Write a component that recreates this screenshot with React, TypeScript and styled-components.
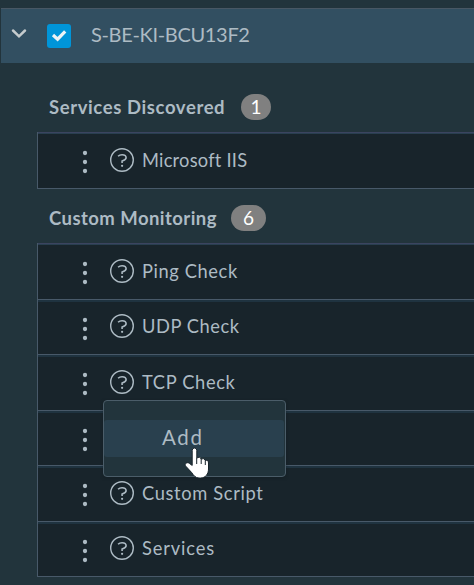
import React from 'react';
import styled, { createGlobalStyle } from 'styled-components';

const GlobalStyle = createGlobalStyle`
  * { box-sizing: border-box; }
  body {
    margin: 0;
    overflow: hidden;
    background: #22343c;
    color: #adbbc4;
    font-family: Lato, "Open Sans", sans-serif;
  }
`;

const Page = styled.main`
  position: relative;
  width: 474px;
  height: 585px;
  padding-top: 8px;
  overflow: hidden;
  background: #22343c;
`;

const HostRow = styled.header`
  display: flex;
  align-items: center;
  height: 55px;
  margin-left: 1px;
  padding: 0 0 1px 10px;
  border-top: 1px solid #485764;
  background: #324f61;
`;

const Chevron = styled.svg`
  width: 16px;
  height: 16px;
  margin-top: -5px;
`;

const CheckBox = styled.span`
  display: flex;
  width: 24px;
  height: 24px;
  margin: 1px 20px 0 20px;
  border-radius: 3px;
  background: #0095d9;
`;

const Label = styled.span<{ $spacing: number }>`
  letter-spacing: ${({ $spacing }) => $spacing}px;
  white-space: nowrap;
`;

const HostName = styled(Label)`
  font-size: 20px;
  line-height: 24px;
  margin-top: -4px;
`;

const Group = styled.section<{ $top: number }>`
  padding: ${({ $top }) => $top}px 0 0 37px;
`;

const GroupHeading = styled.h2`
  display: flex;
  align-items: center;
  height: 26px;
  margin: 0 0 12px;
  padding-left: 12px;
  font-size: 18.5px;
  font-weight: 700;
  line-height: 26px;
`;

const HeadingText = styled(Label)<{ $width: number }>`
  width: ${({ $width }) => $width}px;
`;

const Badge = styled.span<{ $width: number }>`
  width: ${({ $width }) => $width}px;
  height: 26px;
  border-radius: 13px;
  background: #808080;
  color: #fff;
  font-size: 19px;
  font-weight: 400;
  text-align: center;
`;

const List = styled.ul`
  margin: 0;
  padding: 0;
  list-style: none;
  border-left: 1px solid #485969;
  border-bottom: 1px solid #485969;
`;

const Item = styled.li<{ $height: number }>`
  display: flex;
  align-items: center;
  height: ${({ $height }) => $height}px;
  padding-left: 44px;
  border-top: 1px solid #485969;
  background: #18242b;
  box-shadow: inset 0 2px #1f3340;
  font-size: 18.3px;
  line-height: 24px;

  &:first-child {
    border-top-color: #3b4460;
    box-shadow: inset 0 1px #293f50;
  }
`;

const Dots = styled.svg`
  width: 6px;
  height: 24px;
  margin: 3px 21px 0 0;
`;

const Help = styled.svg`
  width: 26px;
  height: 26px;
  margin: -2px 7px 0 0;
`;

const ItemName = styled(Label)`
  margin-top: -2px;
`;

const Menu = styled.div`
  position: absolute;
  top: 400px;
  left: 103px;
  width: 183px;
  height: 77px;
  padding: 19px 1px 0 0;
  border: 1px solid #4b5d69;
  border-radius: 4px;
  background: #22343c;
  box-shadow: 0 1px 3px #10191e80;
`;

const MenuItem = styled.div`
  height: 37px;
  padding-left: 58px;
  border-radius: 3px;
  background: #29404e;
  font-size: 20.5px;
  line-height: 34px;
`;

const Pointer = styled.svg`
  position: absolute;
  top: 447px;
  left: 184px;
  width: 26px;
  height: 32px;
`;

const services = [{ name: 'Microsoft IIS', spacing: 0.22, height: 56 }];

const monitors = [
  { name: 'Ping Check', spacing: 0.6, height: 56 },
  { name: 'UDP Check', spacing: 0.55, height: 55 },
  { name: 'TCP Check', spacing: 0.65, height: 56 },
  { name: '', spacing: 0, height: 55 },
  { name: 'Custom Script', spacing: 0.65, height: 56 },
  { name: 'Services', spacing: 0.85, height: 55 },
];

function ServiceItem({ name, spacing, height }: (typeof services)[number]) {
  return (
    <Item $height={height}>
      <Dots viewBox="0 0 6 24" fill="#adbbc4">
        <circle cx="3" cy="3" r="2.15" />
        <circle cx="3" cy="12" r="2.15" />
        <circle cx="3" cy="21" r="2.15" />
      </Dots>
      <Help viewBox="0 0 26 26" fill="none" stroke="#adbbc4" strokeWidth="1.4">
        <circle cx="13" cy="13" r="11.3" />
        <path d="M9.1 9.3Q10.6 7.8 13.1 7.8Q17.1 7.8 17.1 10.8Q17.1 12.7 13.1 14V16" strokeWidth="1.6" />
        <circle cx="13.1" cy="18.8" r="1.1" fill="#adbbc4" stroke="none" />
      </Help>
      <ItemName $spacing={spacing}>{name}</ItemName>
    </Item>
  );
}

export default function App() {
  return (
    <>
      <GlobalStyle />
      <Page>
        <HostRow>
          <Chevron viewBox="0 0 16 16" fill="none" stroke="#c5cbcd" strokeWidth="2.5" strokeLinecap="round">
            <path d="M2 5.5L8 11.3L14 5.5" />
          </Chevron>
          <CheckBox>
            <svg width="24" height="24" viewBox="0 0 24 24" fill="none" stroke="#edf3f5" strokeWidth="3.2">
              <path d="M6 11L10.6 15.2L18.2 7.4" />
            </svg>
          </CheckBox>
          <HostName $spacing={-0.33}>S-BE-KI-BCU13F2</HostName>
        </HostRow>
        <Group $top={31}>
          <GroupHeading>
            <HeadingText $spacing={0.6} $width={192}>Services Discovered</HeadingText>
            <Badge $width={30}>1</Badge>
          </GroupHeading>
          <List>{services.map((s) => <ServiceItem key={s.name} {...s} />)}</List>
        </Group>
        <Group $top={16}>
          <GroupHeading>
            <HeadingText $spacing={0.45} $width={182}>Custom Monitoring</HeadingText>
            <Badge $width={35}>6</Badge>
          </GroupHeading>
          <List>{monitors.map((m) => <ServiceItem key={m.name} {...m} />)}</List>
        </Group>
        <Menu role="menu">
          <MenuItem role="menuitem"><Label $spacing={1.7}>Add</Label></MenuItem>
        </Menu>
        <Pointer viewBox="0 0 26 32">
          <path
            d="M8.2 3.4Q8.2 1 10.5 1T12.8 3.4V11Q16 8.6 17.2 12Q20.2 10.5 21.3 13.5Q24.5 12.7 24.5 16V22C24.5 27 21.5 31 16.5 31H15C11.5 31 9.6 28.5 7.7 25.6L1.8 19.2C-.2 16.6 3.4 14.4 5.6 16.6L8.2 18.4Z"
            fill="#fff"
            stroke="#18242b"
            strokeWidth="1"
          />
          <path d="M12.7 11V17M17.2 12V17M21.3 13.5V18" fill="none" stroke="#18242b" strokeWidth="1" />
        </Pointer>
      </Page>
    </>
  );
}
